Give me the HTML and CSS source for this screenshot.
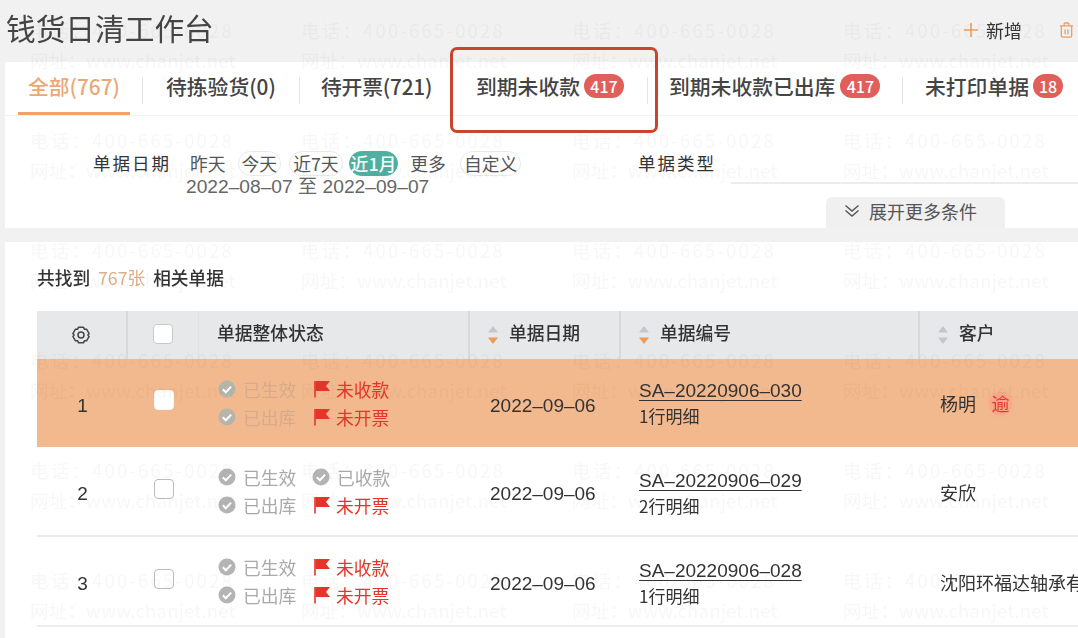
FILE: index.html
```html
<!DOCTYPE html>
<html lang="zh-CN">
<head>
<meta charset="utf-8">
<title>钱货日清工作台</title>
<link rel="stylesheet" href="styles.css">
</head>
<body>
<svg class="defs" width="0" height="0" aria-hidden="true">
  <symbol id="ok" viewBox="0 0 18 18"><circle cx="9" cy="9" r="8.5" fill="currentColor"/><path d="M4.8 9.2l3 3 5.400-5.600" fill="none" stroke="#fff" stroke-width="2"/></symbol>
  <symbol id="flag" viewBox="0 0 17 18"><path d="M1.500 1v16.500" stroke="#e5352b" stroke-width="1.600"/><path d="M2 1h14.500l-4 5 4 5H2z" fill="#e5352b"/></symbol>
  <symbol id="sort" viewBox="0 0 12 20"><path d="M6 1l5 6.500H1z" fill="#c4c7ca"/><path d="M1 12.500h10L6 19z" fill="currentColor"/></symbol>
</svg>
<div class="page">
  <header class="top">
    <h1 class="title">钱货日清工作台</h1>
    <div class="actions">
      <svg class="plus" viewBox="0 0 16 16"><path d="M8 1v14M1 8h14" stroke="#ee9d62" stroke-width="1.600" fill="none"/></svg>
      <span class="add">新增</span>
      <svg class="trash" viewBox="0 0 16 18"><path d="M1 4.500h14M5.500 4.500V2.500q0-1 1-1h3q1 0 1 1v2M2.500 4.500v10.500q0 1.500 1.500 1.500h8q1.500 0 1.500-1.500V4.500M6.500 8.500v5M9.500 8.500v5" fill="none" stroke="#ee9d62" stroke-width="1.400"/></svg>
    </div>
  </header>

  <section class="card">
    <nav class="tabs">
      <a class="tab tab-active">全部(767)</a>
      <a class="tab tab-two">待拣验货(0)</a>
      <a class="tab tab-three">待开票(721)</a>
      <a class="tab tab-four">到期未收款<span class="badge">417</span></a>
      <a class="tab tab-five">到期未收款已出库<span class="badge">417</span></a>
      <a class="tab tab-six">未打印单据<span class="badge badge-small">18</span></a>
    </nav>
    <div class="filters">
      <div class="date-filter">
        <span class="label">单据日期</span>
        <div class="date-body">
          <div class="chips">
            <span class="chip chip-plain">昨天</span>
            <span class="chip">今天</span>
            <span class="chip">近7天</span>
            <span class="chip chip-on">近1月</span>
            <span class="chip chip-plain">更多</span>
            <span class="chip chip-last">自定义</span>
          </div>
          <div class="range">2022–08–07 至 2022–09–07</div>
        </div>
      </div>
      <div class="type-filter">
        <span class="label">单据类型</span>
        <span class="type-input"></span>
      </div>
    </div>
    <div class="expand">
      <svg class="chev" viewBox="0 0 16 14"><path d="M1.500 1.500L8 7l6.500-5.500M1.500 6.500L8 12l6.500-5.500" fill="none" stroke="#555" stroke-width="1.400"/></svg>
      <span>展开更多条件</span>
    </div>
  </section>

  <section class="results">
    <p class="count">共找到 <em>767张</em> 相关单据</p>
    <div class="table">
      <div class="row head">
        <div class="cell cell-c line"><svg class="gear" viewBox="0 0 20 20"><path d="M7.600 2.200h4.800l1 2 2.300.1 2.400 4.200-1.200 1.500 1.200 1.500-2.400 4.200-2.300.1-1 2H7.600l-1-2-2.300-.1-2.400-4.200L3.100 10 1.900 8.500l2.400-4.200 2.300-.1z" fill="none" stroke="#444" stroke-width="1.500" stroke-linejoin="round"/><circle cx="10" cy="10" r="3" fill="none" stroke="#444" stroke-width="1.500"/></svg></div>
        <div class="cell cell-c soft"><span class="box box-head"></span></div>
        <div class="cell status-head line"><span>单据整体状态</span></div>
        <div class="cell sort-head line"><svg class="sort sort-on"><use href="#sort"/></svg><span>单据日期</span></div>
        <div class="cell sort-head line"><svg class="sort sort-on"><use href="#sort"/></svg><span>单据编号</span></div>
        <div class="cell sort-head"><svg class="sort"><use href="#sort"/></svg><span>客户</span></div>
      </div>

      <div class="row item item-hot">
        <div class="cell cell-c num">1</div>
        <div class="cell cell-c"><span class="box box-fill"></span></div>
        <div class="cell status">
          <span class="st st-dim"><svg class="ic"><use href="#ok"/></svg>已生效</span>
          <span class="st st-red"><svg class="ic"><use href="#flag"/></svg>未收款</span>
          <span class="st st-dim"><svg class="ic"><use href="#ok"/></svg>已出库</span>
          <span class="st st-red"><svg class="ic"><use href="#flag"/></svg>未开票</span>
        </div>
        <div class="cell date">2022–09–06</div>
        <div class="cell bill"><a class="code">SA–20220906–030</a><span class="detail">1行明细</span></div>
        <div class="cell cust">杨明<span class="late">逾</span></div>
      </div>

      <div class="row item">
        <div class="cell cell-c num">2</div>
        <div class="cell cell-c"><span class="box"></span></div>
        <div class="cell status">
          <span class="st"><svg class="ic"><use href="#ok"/></svg>已生效</span>
          <span class="st"><svg class="ic"><use href="#ok"/></svg>已收款</span>
          <span class="st"><svg class="ic"><use href="#ok"/></svg>已出库</span>
          <span class="st st-red"><svg class="ic"><use href="#flag"/></svg>未开票</span>
        </div>
        <div class="cell date">2022–09–06</div>
        <div class="cell bill"><a class="code">SA–20220906–029</a><span class="detail">2行明细</span></div>
        <div class="cell cust">安欣</div>
      </div>

      <div class="row item">
        <div class="cell cell-c num">3</div>
        <div class="cell cell-c"><span class="box"></span></div>
        <div class="cell status">
          <span class="st"><svg class="ic"><use href="#ok"/></svg>已生效</span>
          <span class="st st-red"><svg class="ic"><use href="#flag"/></svg>未收款</span>
          <span class="st"><svg class="ic"><use href="#ok"/></svg>已出库</span>
          <span class="st st-red"><svg class="ic"><use href="#flag"/></svg>未开票</span>
        </div>
        <div class="cell date">2022–09–06</div>
        <div class="cell bill"><a class="code">SA–20220906–028</a><span class="detail">1行明细</span></div>
        <div class="cell cust">沈阳环福达轴承有</div>
      </div>
    </div>
  </section>

  <div class="callout"></div>

  <div class="watermarks" aria-hidden="true">
    <div class="mark"><span>电话：400-665-0028</span><span>网址：www.chanjet.net</span></div>
    <div class="mark"><span>电话：400-665-0028</span><span>网址：www.chanjet.net</span></div>
    <div class="mark"><span>电话：400-665-0028</span><span>网址：www.chanjet.net</span></div>
    <div class="mark"><span>电话：400-665-0028</span><span>网址：www.chanjet.net</span></div>
    <div class="mark"><span>电话：400-665-0028</span><span>网址：www.chanjet.net</span></div>
    <div class="mark"><span>电话：400-665-0028</span><span>网址：www.chanjet.net</span></div>
    <div class="mark"><span>电话：400-665-0028</span><span>网址：www.chanjet.net</span></div>
    <div class="mark"><span>电话：400-665-0028</span><span>网址：www.chanjet.net</span></div>
    <div class="mark"><span>电话：400-665-0028</span><span>网址：www.chanjet.net</span></div>
    <div class="mark"><span>电话：400-665-0028</span><span>网址：www.chanjet.net</span></div>
    <div class="mark"><span>电话：400-665-0028</span><span>网址：www.chanjet.net</span></div>
    <div class="mark"><span>电话：400-665-0028</span><span>网址：www.chanjet.net</span></div>
    <div class="mark"><span>电话：400-665-0028</span><span>网址：www.chanjet.net</span></div>
    <div class="mark"><span>电话：400-665-0028</span><span>网址：www.chanjet.net</span></div>
    <div class="mark"><span>电话：400-665-0028</span><span>网址：www.chanjet.net</span></div>
    <div class="mark"><span>电话：400-665-0028</span><span>网址：www.chanjet.net</span></div>
    <div class="mark"><span>电话：400-665-0028</span><span>网址：www.chanjet.net</span></div>
    <div class="mark"><span>电话：400-665-0028</span><span>网址：www.chanjet.net</span></div>
    <div class="mark"><span>电话：400-665-0028</span><span>网址：www.chanjet.net</span></div>
    <div class="mark"><span>电话：400-665-0028</span><span>网址：www.chanjet.net</span></div>
    <div class="mark"><span>电话：400-665-0028</span><span>网址：www.chanjet.net</span></div>
    <div class="mark"><span>电话：400-665-0028</span><span>网址：www.chanjet.net</span></div>
    <div class="mark"><span>电话：400-665-0028</span><span>网址：www.chanjet.net</span></div>
    <div class="mark"><span>电话：400-665-0028</span><span>网址：www.chanjet.net</span></div>
  </div>
</div>
</body>
</html>
```

FILE: styles.css
```css
* { box-sizing: border-box; }
html, body { margin: 0; height: 638px; overflow: hidden; background: #f1f1f1; }
body { font-family: "Noto Sans CJK SC", "Noto Sans", sans-serif; color: #333; }
.defs { position: absolute; }

.page { position: relative; width: 1078px; height: 638px; overflow: hidden; filter: blur(0.45px); }

/* Header */
.top { height: 62px; padding-left: 6px; display: flex; align-items: flex-start; justify-content: space-between; }
.title { margin: 6px 0 0; font-size: 29.700px; line-height: 44px; font-weight: 400; color: #444; }
.actions { display: flex; align-items: center; margin-top: 19px; width: 115px; }
.plus { width: 16px; height: 16px; }
.add { margin-left: 7px; font-size: 18px; line-height: 22px; color: #333; }
.trash { width: 15px; height: 18px; margin-left: 37px; }

/* Filter card */
.card { position: relative; margin-left: 5px; height: 166px; background: #fff; }
.tabs { display: flex; height: 54px; border-bottom: 1px solid #f2f2f2; }
.tab { position: relative; display: flex; align-items: center; height: 53px; padding-bottom: 5px; font-size: 20.800px; font-weight: 500; color: #444; white-space: nowrap; }
.tab::after { content: ""; position: absolute; right: 0; top: 15px; width: 1px; height: 27px; background: #e4e4e4; }
.tab-active { margin-left: 13px; width: 112px; padding-left: 10px; color: #e8a878; box-shadow: inset 0 -3px 0 #eda36b; }
.tab-active::after { right: -13px; }
.tab-two { margin-left: 13px; padding-left: 23px; width: 157px; }
.tab-three { padding-left: 21px; width: 147px; letter-spacing: -.2px; }
.tab-three::after { display: none; }
.tab-four { width: 201px; padding-left: 29px; }
.tab-five { width: 255px; padding-left: 21px; }
.tab-six { padding-left: 22px; }
.tab-six::after { display: none; }
.badge { margin-left: 4px; min-width: 40px; height: 24px; padding: 0 6px; border-radius: 12px; background: #e15f5b; color: #fff; font-size: 16px; line-height: 24px; text-align: center; font-weight: 500; }
.tab-five .badge { margin-left: 5px; }
.badge-small { min-width: 30px; }

.filters { display: flex; align-items: flex-start; padding: 35px 0 0 88px; }
.label { font-size: 17.500px; line-height: 24px; letter-spacing: 2px; color: #333; white-space: nowrap; }
.date-filter { display: flex; width: 545px; }
.date-body { margin-left: 13px; width: 360px; }
.chips { display: flex; gap: 8px; height: 24px; margin-left: 2px; }
.chip { height: 25px; padding: 0 3px; border-radius: 13px; border: 1px solid #e9e9e9; font-size: 17.800px; line-height: 23px; color: #555; white-space: nowrap; }
.chip-plain { border-color: transparent; }
.chip-on { background: #4fb0a1; border-color: #4fb0a1; color: #fff; font-weight: 500; padding: 0 1px; margin-left: -2px; }
.chip-last { margin-left: 2px; }
.range { margin: 2px 0 0 2px; font-family: "Liberation Sans", "Noto Sans CJK SC", sans-serif; font-size: 19.200px; line-height: 20px; color: #666; white-space: nowrap; }
.type-filter { position: relative; flex: 1; }
.type-input { position: absolute; left: 93px; right: 0; top: 31px; height: 2px; background: #ececec; }
.expand { position: absolute; left: 821px; bottom: 0; display: flex; align-items: center; width: 179px; height: 31px; padding: 0 0 3px 18px; gap: 9px; border-radius: 6px 6px 0 0; background: #f0f0f0; font-size: 18px; color: #555; white-space: nowrap; }
.chev { width: 16px; height: 14px; }

/* Results */
.results { margin: 14px 0 0 5px; height: 396px; background: #fff; padding: 0 0 0 32px; }
.count { margin: 0; height: 69px; padding-top: 23px; font-size: 17.700px; line-height: 24px; font-weight: 500; color: #333; word-spacing: 2px; }
.count em { margin: 0 2px; font-style: normal; font-weight: 400; color: #dfae86; }

.row { display: grid; grid-template-columns: 91px 71px 271px 151px 299px 1fr; }
.head { height: 48px; background: #e7e8ea; font-size: 17.800px; font-weight: 500; color: #333; }
.head span:not(.box) { position: relative; top: -3px; }
.cell { display: flex; align-items: center; min-width: 0; white-space: nowrap; }
.cell-c { justify-content: center; }
.line { border-right: 2px solid #d8d9db; }
.soft { border-right: 1px solid #e1e2e4; }
.status-head { padding-left: 18px; }
.sort-head { padding-left: 17px; }
.sort { width: 12px; height: 20px; margin-right: 10px; color: #c4c7ca; }
.sort-on { color: #ec9a5a; }
.gear { width: 20px; height: 20px; margin: 0 1px 1px 0; }
.box { position: relative; top: -2px; width: 20px; height: 20px; border-radius: 4px; border: 1px solid #bbb; background: #fff; }
.box-head { top: -1px; border-color: #c9c9c9; }
.item-hot .box { top: -3px; }
.box-fill { border-color: #f5f5f5; }

.item { height: 90px; border-bottom: 2px solid #ececec; font-size: 18px; }
.item-hot { height: 88px; background: #f3b98e; border-bottom: 0; }
.num { padding-top: 5px; font-family: "Liberation Sans", sans-serif; font-size: 19px; color: #333; }
.status { display: grid; grid-template-columns: 94px 80px; grid-auto-rows: 28px; align-content: center; padding-left: 19px; }
.st { display: flex; align-items: center; gap: 7px; font-size: 17.800px; color: #a9a9a9; }
.st-red { gap: 5px; margin-left: 1px; }
.ic { width: 18px; height: 18px; color: #b4b4b4; flex: none; }
.st-dim { color: #d6ab8b; }
.st-dim .ic { color: #b5b5ac; }
.st-red { color: #e5352b; }
.date { padding: 5px 0 0 20px; font-family: "Liberation Sans", sans-serif; font-size: 19px; color: #333; }
.bill { flex-direction: column; align-items: flex-start; justify-content: center; padding: 4px 0 0 18px; }
.item-hot .bill { padding-top: 0; }
.code { font-family: "Liberation Sans", sans-serif; font-size: 19px; line-height: 25px; color: #333; text-decoration: underline; text-underline-offset: 3px; }
.detail { font-size: 17px; line-height: 25px; color: #333; }
.cust { padding: 2px 0 0 20px; overflow: hidden; font-size: 18px; color: #333; }
.item-hot .cust { padding-top: 0; }
.late { display: inline-block; margin-left: 13px; width: 23px; height: 23px; border-radius: 50%; background: #f5a98a; color: #e5352b; line-height: 23px; text-align: center; font-size: 18px; box-shadow: 0 0 4px #f5a98a; }

/* Red annotation box over the tabs */
.callout { position: absolute; left: 450px; top: 47px; width: 208px; height: 86px; border: 3.500px solid #c9452f; border-radius: 7px; }

/* Repeating watermark over the page */
.watermarks { position: absolute; left: 30px; top: 16px; display: grid; grid-template-columns: repeat(4, 271px); grid-auto-rows: 110px; pointer-events: none; }
.mark { display: flex; flex-direction: column; gap: 2px; color: rgba(60, 60, 60, 0.045); white-space: nowrap; }
.mark span { height: 28px; line-height: 28px; font-size: 18.500px; letter-spacing: .2px; }
.mark span:first-child { letter-spacing: 2.200px; }
```
